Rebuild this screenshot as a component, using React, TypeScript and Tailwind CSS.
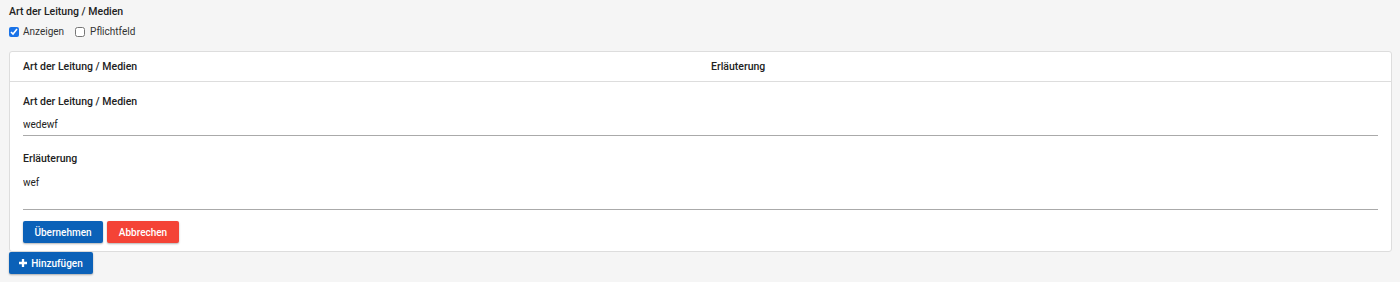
import React, { useState } from 'react'

const font = { fontFamily: 'Roboto, "Noto Sans", sans-serif' }

const App: React.FC = () => {
  const [show, setShow] = useState(true)
  const [required, setRequired] = useState(false)
  const [art, setArt] = useState('wedewf')
  const [note, setNote] = useState('wef')

  return (
    <div className="min-h-[282px] w-[1400px] bg-[#f5f5f5] pl-[9px] pr-[8px] pt-[5px] text-[#222]" style={font}>
      <div className="text-[10.5px] font-medium leading-[14px]">Art der Leitung / Medien</div>
      <div className="mt-[6px] flex items-center text-[10px] leading-[14px] text-[#333]">
        <label className="flex items-center gap-[4px]">
          <input
            type="checkbox"
            checked={show}
            onChange={e => setShow(e.target.checked)}
            className="m-0 h-[10px] w-[10px] accent-[#1a73e8]"
          />
          Anzeigen
        </label>
        <label className="ml-[11px] flex items-center gap-[5px]">
          <input
            type="checkbox"
            checked={required}
            onChange={e => setRequired(e.target.checked)}
            className="m-0 h-[10px] w-[10px] accent-[#1a73e8]"
          />
          Pflichtfeld
        </label>
      </div>

      <div className="mt-[12px] rounded-[3px] border border-[#dddddd] bg-white">
        <div className="flex h-[30px] items-center border-b border-[#dddddd] px-[13px] text-[10.5px] font-medium">
          <div className="w-[688px]">Art der Leitung / Medien</div>
          <div>Erläuterung</div>
        </div>

        <div className="px-[13px] pb-[8px]">
          <div className="pt-[13px] text-[10.5px] font-medium leading-[14px]">Art der Leitung / Medien</div>
          <input
            value={art}
            onChange={e => setArt(e.target.value)}
            className="mt-[4px] block h-[23px] w-full border-b border-[#aaaaaa] bg-transparent text-[10px] outline-none"
            style={font}
          />
          <div className="pt-[16px] text-[10.5px] font-medium leading-[14px]">Erläuterung</div>
          <textarea
            value={note}
            onChange={e => setNote(e.target.value)}
            rows={1}
            className="mt-[7px] block h-[37px] w-full resize-none border-b border-[#aaaaaa] bg-transparent pt-[3px] text-[10px] leading-[14px] outline-none"
            style={font}
          />
          <div className="mt-[11px] flex gap-[4px]">
            <button className="h-[22px] w-[80px] rounded-[2px] bg-[#0b61b8] text-[10px] font-medium text-white shadow-[0_1px_2px_rgba(0,0,0,0.3)]">
              Übernehmen
            </button>
            <button className="h-[22px] w-[72px] rounded-[2px] bg-[#f44336] text-[10px] font-medium text-white shadow-[0_1px_2px_rgba(0,0,0,0.3)]">
              Abbrechen
            </button>
          </div>
        </div>
      </div>

      <button className="flex h-[22px] w-[84px] items-center justify-center gap-[4px] rounded-[2px] bg-[#0b61b8] text-[10px] font-medium text-white shadow-[0_1px_2px_rgba(0,0,0,0.3)]">
        <svg width="8" height="8" viewBox="0 0 9 9" fill="white">
          <path d="M3.2 0h2.6v3.2H9v2.6H5.8V9H3.2V5.8H0V3.2h3.2z" />
        </svg>
        Hinzufügen
      </button>
    </div>
  )
}

export default App
